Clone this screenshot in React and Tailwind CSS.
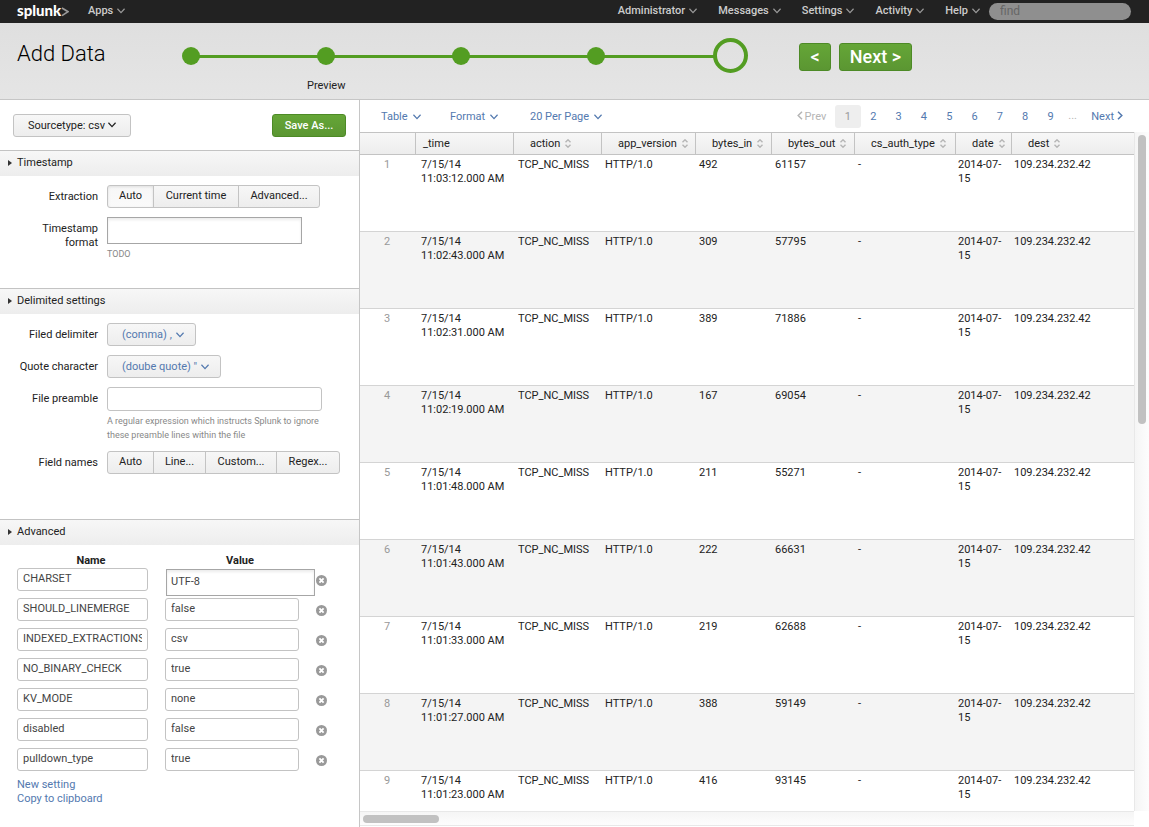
import React from "react";

const BLUE = "text-[#5379af]";

function Chevron({ className = "" }) {
  return (
    <svg className={"inline-block shrink-0 " + className} width="8" height="6" viewBox="0 0 8 6" fill="none" stroke="currentColor" aria-hidden="true">
      <path d="M0.4 0.8 L4 4.6 L7.6 0.8" strokeWidth="1.3" />
    </svg>
  );
}

function SideChevron({ left }) {
  return (
    <svg className="mb-[2px] inline-block shrink-0" width="6" height="9" viewBox="0 0 6 9" fill="none" stroke="currentColor" aria-hidden="true">
      <path d={left ? "M5 0.8 L1.2 4.5 L5 8.2" : "M1 0.8 L4.8 4.5 L1 8.2"} strokeWidth="1.5" />
    </svg>
  );
}

function SortIcon() {
  return (
    <svg className="inline-block shrink-0" width="6" height="9" viewBox="0 0 6 9" fill="none" stroke="#b5b5b5" aria-hidden="true">
      <path d="M0.5 3.3 L3 0.8 L5.5 3.3 M0.5 5.7 L3 8.2 L5.5 5.7" strokeWidth="1.4" />
    </svg>
  );
}

function RemoveIcon() {
  return (
    <svg width="11" height="11" viewBox="0 0 11 11" aria-hidden="true">
      <circle cx="5.5" cy="5.5" r="5.5" fill="#999" />
      <path d="M3.4 3.4 L7.6 7.6 M7.6 3.4 L3.4 7.6" stroke="#fff" strokeWidth="1.9" />
    </svg>
  );
}

function TopBar() {
  const menus = ["Administrator", "Messages", "Settings", "Activity", "Help"];
  return (
    <nav className="flex h-[23px] shrink-0 items-center bg-[#222] font-medium text-[#ccc]">
      <a href="#home" className="ml-[17px] flex w-[52px] items-center pb-[3px] font-[Lato,sans-serif] text-[15px] leading-5 font-black text-white">
        splunk
        <svg className="mt-1 shrink-0" width="8" height="10" viewBox="0 0 8 10" fill="none" aria-hidden="true">
          <path d="M1 1 L7 4.7 L1 8.6" stroke="#999" strokeWidth="1.7" />
        </svg>
      </a>
      <button className="ml-[19px] flex h-5 items-center gap-1 pb-[2px]">
        Apps <Chevron className="text-[#999]" />
      </button>
      <div className="ml-auto flex h-5 gap-[21px] pb-[2px]">
        {menus.map((m) => (
          <button key={m} className="flex items-center gap-1">
            {m} <Chevron className="text-[#999]" />
          </button>
        ))}
      </div>
      <input
        aria-label="find"
        placeholder="find"
        className="mr-[18px] ml-[9px] h-[17px] w-[142px] rounded-full bg-[#8f8f8f] px-[11px] pb-[2px] text-xs font-normal placeholder:text-[#666]"
      />
    </nav>
  );
}

const GREEN_BTN = "rounded-[3px] border border-[#4d8a26] bg-linear-to-b from-[#65a637] to-[#5b9632] font-medium text-white";

function Header() {
  return (
    <header className="flex h-[77px] shrink-0 border-b border-[#c6c6c6] bg-linear-to-b from-[#dfdfdf] to-[#e5e5e5]">
      <h1 className="ml-[17px] w-[165px] pt-[15px] text-[22px] leading-8 font-light text-black">Add Data</h1>
      <div className="w-[568px] pt-[14px]">
        <svg className="block" width="568" height="38" viewBox="0 0 568 38" role="img" aria-label="Step 5 of 5">
          <path d="M9 19.5 H532" stroke="#539d22" strokeWidth="3" />
          {[9, 144, 279, 414].map((x) => (
            <circle key={x} cx={x} cy="19" r="9" fill="#539d22" />
          ))}
          <circle cx="548.5" cy="18.5" r="15.5" fill="none" stroke="#539d22" strokeWidth="4" />
        </svg>
        <p className="ml-[125px] pt-1 text-[11px] leading-[14px]">Preview</p>
      </div>
      <div className="ml-[49px] flex gap-2 pt-5 text-lg leading-6">
        <button className={GREEN_BTN + " h-7 w-8"}>&lt;</button>
        <button className={GREEN_BTN + " h-7 w-[73px]"}>Next &gt;</button>
      </div>
    </header>
  );
}

const BTN = "border border-[#c3c3c3] bg-linear-to-b from-[#f7f7f7] to-[#ededed]";

function SectionTitle({ children }) {
  return (
    <h2 className="border-t border-[#c3c3c3] bg-linear-to-b from-[#f7f7f7] to-[#ededed]">
      <button className="flex h-[25px] w-full items-center gap-[5px] pb-px pl-2">
        <svg width="4" height="6" viewBox="0 0 4 6" aria-hidden="true">
          <path d="M0 0 L4 3 L0 6 Z" fill="#333" />
        </svg>
        {children}
      </button>
    </h2>
  );
}

function Segmented({ items, active, label }) {
  return (
    <div role="group" aria-label={label} className="flex">
      {items.map(([t, w]) => (
        <button
          key={t}
          className={BTN + " -ml-px h-[23px] pb-[2px] first:ml-0 first:rounded-l-[3px] last:rounded-r-[3px] " + w + (t === active ? " to-[#fafafa] shadow-[inset_0_1px_3px_rgba(0,0,0,0.1)]" : "")}
        >
          {t}
        </button>
      ))}
    </div>
  );
}

function Row({ label, htmlFor, children }) {
  const Tag = htmlFor ? "label" : "span";
  return (
    <div className="flex gap-[9px]">
      <Tag htmlFor={htmlFor} className="w-[98px] shrink-0 pt-[5px] pl-4 text-right">
        {label}
      </Tag>
      <div>{children}</div>
    </div>
  );
}

const settings = [
  ["CHARSET", "UTF-8"],
  ["SHOULD_LINEMERGE", "false"],
  ["INDEXED_EXTRACTIONS", "csv"],
  ["NO_BINARY_CHECK", "true"],
  ["KV_MODE", "none"],
  ["disabled", "false"],
  ["pulldown_type", "true"],
];

const FIELD = "rounded-[3px] border border-[#c3c3c3] bg-white px-[5px] text-[#444]";
const BOX = "border border-[#a6a6a6] bg-white px-1 text-[#444] shadow-[inset_0_2px_3px_rgba(0,0,0,0.08)]";

function Sidebar() {
  return (
    <aside className="w-[360px] shrink-0 border-r border-[#c6c6c6]">
      <div className="flex h-[50px] justify-between pt-[14px] pr-[13px] pl-[13px]">
        <button className={BTN + " flex h-[23px] w-[118px] items-center justify-center gap-[3px] rounded-[3px]"}>
          Sourcetype: csv <Chevron className="mb-[2px]" />
        </button>
        <button className={GREEN_BTN + " h-[23px] w-[74px] font-bold"}>Save As...</button>
      </div>

      <section className="h-[138px]">
        <SectionTitle>Timestamp</SectionTitle>
        <div className="flex flex-col gap-[9px] pt-[9px]">
          <Row label="Extraction">
            <Segmented label="Extraction" active="Auto" items={[["Auto", "w-[47px]"], ["Current time", "w-[86px]"], ["Advanced...", "w-[82px]"]]} />
          </Row>
          <Row label="Timestamp format" htmlFor="ts-format">
            <input id="ts-format" className={BOX + " block h-[27px] w-[195px]"} />
            <p className="pt-[3px] text-[9px] text-[#888]">TODO</p>
          </Row>
        </div>
      </section>

      <section className="h-[231px]">
        <SectionTitle>Delimited settings</SectionTitle>
        <div className="flex flex-col gap-[9px] pt-[9px]">
          <Row label="Filed delimiter">
            <button className={BTN + " flex h-[23px] w-[89px] items-center gap-1 rounded-[3px] pl-[14px] " + BLUE}>
              (comma) , <Chevron />
            </button>
          </Row>
          <Row label="Quote character">
            <button className={BTN + " flex h-[23px] w-[114px] items-center gap-1 rounded-[3px] pl-[14px] " + BLUE}>
              (doube quote) " <Chevron />
            </button>
          </Row>
          <Row label="File preamble" htmlFor="preamble">
            <input id="preamble" className={FIELD + " block h-6 w-[215px]"} />
            <p className="w-[225px] pt-[3px] text-[9px] text-[#888]">
              A regular expression which instructs Splunk to ignore
              <br />
              these preamble lines within the file
            </p>
          </Row>
          <Row label="Field names">
            <Segmented label="Field names" items={[["Auto", "w-[47px]"], ["Line...", "w-[53px]"], ["Custom...", "w-[72px]"], ["Regex...", "w-[64px]"]]} />
          </Row>
        </div>
      </section>

      <section>
        <SectionTitle>Advanced</SectionTitle>
        <table className="mt-2 ml-[17px] w-[316px] table-fixed border-separate border-spacing-0">
          <colgroup>
            <col className="w-[148px]" />
            <col className="w-[150px]" />
            <col />
          </colgroup>
          <thead>
            <tr className="h-[15px]">
              <th className="font-bold">Name</th>
              <th className="font-bold">Value</th>
              <th />
            </tr>
          </thead>
          <tbody>
            {settings.map(([name, value], i) => (
              <tr key={name} className="h-[30px] align-top">
                <td>
                  <input aria-label={"Name " + (i + 1)} defaultValue={name} className={FIELD + " block h-[23px] w-[131px] pb-[3px]"} />
                </td>
                <td>
                  <input
                    aria-label={name + " value"}
                    defaultValue={value}
                    className={i === 0 ? BOX + " mt-px ml-px block h-[27px] w-[149px] pb-[2px]" : FIELD + " block h-[23px] w-[134px] pb-[3px]"}
                  />
                </td>
                <td>
                  <button aria-label={"Remove " + name} className="ml-px block pt-[7px]">
                    <RemoveIcon />
                  </button>
                </td>
              </tr>
            ))}
          </tbody>
        </table>
        <div className={"flex flex-col items-start pl-[17px] " + BLUE}>
          <a href="#new">New setting</a>
          <a href="#copy">Copy to clipboard</a>
        </div>
      </section>
    </aside>
  );
}

const columns = ["_time", "action", "app_version", "bytes_in", "bytes_out", "cs_auth_type", "date", "dest"];
const rows = [
  ["11:03:12.000 AM", 492, 61157],
  ["11:02:43.000 AM", 309, 57795],
  ["11:02:31.000 AM", 389, 71886],
  ["11:02:19.000 AM", 167, 69054],
  ["11:01:48.000 AM", 211, 55271],
  ["11:01:43.000 AM", 222, 66631],
  ["11:01:33.000 AM", 219, 62688],
  ["11:01:27.000 AM", 388, 59149],
  ["11:01:23.000 AM", 416, 93145],
];

function Toolbar() {
  return (
    <div className={"flex h-8 shrink-0 items-center pr-[26px] pl-[21px] " + BLUE}>
      {[["Table", "w-[69px]"], ["Format", "w-20"], ["20 Per Page", "w-[90px]"]].map(([t, w]) => (
        <div key={t} className={w}>
          <button className="flex items-center gap-[5px] pt-px">
            {t} <Chevron />
          </button>
        </div>
      ))}
      <div className="ml-auto flex items-center pt-px">
        <button disabled className="mr-[9px] flex items-center gap-[2px] text-[#b5b5b5]">
          <SideChevron left /> Prev
        </button>
        <div className="flex w-[228px]">
          {[1, 2, 3, 4, 5, 6, 7, 8, 9].map((n) => (
            <button key={n} className={"h-[23px] flex-1 rounded-[3px] " + (n === 1 ? "bg-[#eee] text-[#999]" : "")}>
              {n}
            </button>
          ))}
        </div>
        <span className="ml-[5px] w-[23px] pb-[2px] text-[#b5b5b5]">...</span>
        <button className="flex items-center gap-[3px]">
          Next <SideChevron />
        </button>
      </div>
    </div>
  );
}

function ResultsTable() {
  return (
    <table className="w-full table-fixed border-separate border-spacing-0">
      <colgroup>
        <col className="w-14" />
        <col className="w-[98px]" />
        <col className="w-[88px]" />
        <col className="w-[94px]" />
        <col className="w-[76px]" />
        <col className="w-[83px]" />
        <col className="w-[101px]" />
        <col className="w-14" />
        <col />
      </colgroup>
      <thead>
        <tr className="h-[23px] text-left [&>th]:border-y [&>th]:border-[#c3c3c3] [&>th]:bg-linear-to-b [&>th]:from-[#f7f7f7] [&>th]:to-[#ededed] [&>th]:p-0 [&>th]:font-normal">
          <th className="border-r" aria-label="Row" />
          {columns.map((c) => (
            <th key={c} className="border-r last:border-r-0">
              <button className={"flex items-center gap-[5px] whitespace-nowrap " + (c === "_time" ? "ml-[7px]" : "ml-4")}>
                {c} {c !== "_time" && <SortIcon />}
              </button>
            </th>
          ))}
        </tr>
      </thead>
      <tbody>
        {rows.map(([time, bin, bout], i) => (
          <tr key={time} className="h-[77px] align-top even:bg-[#f4f4f4] [&>td]:border-b [&>td]:border-[#d4d4d4] [&>td]:pt-[3px]">
            <td className="pr-[2px] text-center text-[#999]">{i + 1}</td>
            <td className="pl-[5px] whitespace-nowrap">
              7/15/14
              <br />
              {time}
            </td>
            <td className="pl-1">TCP_NC_MISS</td>
            <td className="pl-[3px]">HTTP/1.0</td>
            <td className="pl-[3px]">{bin}</td>
            <td className="pl-[3px]">{bout}</td>
            <td className="pl-[3px]">-</td>
            <td className="pl-[2px]">2014-07-15</td>
            <td className="pl-[2px]">109.234.232.42</td>
          </tr>
        ))}
      </tbody>
    </table>
  );
}

export default function App() {
  return (
    <div className="flex h-screen flex-col overflow-hidden bg-white font-[Roboto,sans-serif] text-[11px] leading-[14px] text-[#222]">
      <TopBar />
      <Header />
      <div className="flex min-h-0 flex-1">
        <Sidebar />
        <main className="flex min-w-0 flex-1 flex-col">
          <Toolbar />
          <div className="flex min-h-0 flex-1">
            <div className="min-w-0 flex-1 overflow-hidden">
              <ResultsTable />
            </div>
            <div className="w-[15px] shrink-0 border-l border-[#e8e8e8] bg-linear-to-r from-[#f5f5f5] to-[#fdfdfd] px-[3px] pt-[3px]" aria-hidden="true">
              <div className="h-[289px] w-2 rounded-full bg-[#c1c1c1]" />
            </div>
          </div>
          <div className="mr-[15px] mb-px h-[15px] shrink-0 border-y border-[#e8e8e8] bg-linear-to-b from-[#f5f5f5] to-[#fdfdfd] px-[3px] pt-[3px]" aria-hidden="true">
            <div className="h-2 w-[76px] rounded-full bg-[#c1c1c1]" />
          </div>
        </main>
      </div>
    </div>
  );
}
